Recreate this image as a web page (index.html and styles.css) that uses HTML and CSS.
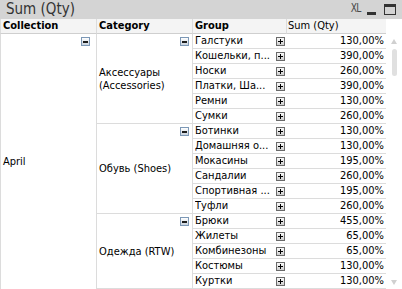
FILE: index.html
```html
<!DOCTYPE html>
<html>
<head>
<meta charset="utf-8">
<link rel="stylesheet" href="styles.css">
</head>
<body>
<div class="window">
  <div class="titlebar">
    <span class="title">Sum (Qty)</span>
    <div class="controls">
      <span class="xl">XL</span>
      <span class="min"></span>
      <span class="max"></span>
    </div>
  </div>
  <div class="content">
    <div class="pivot">
      <div class="hcell hcoll">Collection</div>
      <div class="hcell hcat">Category</div>
      <div class="hcell hgrp">Group</div>
      <div class="hcell hsum">Sum (Qty)</div>

      <div class="coll span17"><span class="collapse"></span><span class="ctext">April</span></div>

      <div class="cat span6"><span class="collapse"></span><span class="ctext">Аксессуары<br>(Accessories)</span></div>
      <div class="grp"><span class="gtext">Галстуки</span><span class="expand"></span></div><div class="sum">130,00%</div>
      <div class="grp"><span class="gtext">Кошельки, п...</span><span class="expand"></span></div><div class="sum">390,00%</div>
      <div class="grp"><span class="gtext">Носки</span><span class="expand"></span></div><div class="sum">260,00%</div>
      <div class="grp"><span class="gtext">Платки, Ша...</span><span class="expand"></span></div><div class="sum">390,00%</div>
      <div class="grp"><span class="gtext">Ремни</span><span class="expand"></span></div><div class="sum">130,00%</div>
      <div class="grp"><span class="gtext">Сумки</span><span class="expand"></span></div><div class="sum">260,00%</div>

      <div class="cat span6"><span class="collapse"></span><span class="ctext">Обувь (Shoes)</span></div>
      <div class="grp"><span class="gtext">Ботинки</span><span class="expand"></span></div><div class="sum">130,00%</div>
      <div class="grp"><span class="gtext">Домашняя о...</span><span class="expand"></span></div><div class="sum">130,00%</div>
      <div class="grp"><span class="gtext">Мокасины</span><span class="expand"></span></div><div class="sum">195,00%</div>
      <div class="grp"><span class="gtext">Сандалии</span><span class="expand"></span></div><div class="sum">260,00%</div>
      <div class="grp"><span class="gtext">Спортивная ...</span><span class="expand"></span></div><div class="sum">195,00%</div>
      <div class="grp"><span class="gtext">Туфли</span><span class="expand"></span></div><div class="sum">260,00%</div>

      <div class="cat span5"><span class="collapse"></span><span class="ctext">Одежда (RTW)</span></div>
      <div class="grp"><span class="gtext">Брюки</span><span class="expand"></span></div><div class="sum">455,00%</div>
      <div class="grp"><span class="gtext">Жилеты</span><span class="expand"></span></div><div class="sum">65,00%</div>
      <div class="grp"><span class="gtext">Комбинезоны</span><span class="expand"></span></div><div class="sum">65,00%</div>
      <div class="grp"><span class="gtext">Костюмы</span><span class="expand"></span></div><div class="sum">130,00%</div>
      <div class="grp"><span class="gtext">Куртки</span><span class="expand"></span></div><div class="sum">130,00%</div>
    </div>
    <div class="scrollbar">
      <span class="arrow up"></span>
      <span class="thumb"></span>
      <span class="track"></span>
      <span class="arrow down"></span>
    </div>
  </div>
</div>
</body>
</html>
```

FILE: styles.css
```css
html, body {
  margin: 0;
  padding: 0;
}

body {
  width: 402px;
  height: 289px;
  overflow: hidden;
  background: #ffffff;
  font-family: "DejaVu Sans Condensed", "DejaVu Sans", sans-serif;
  font-stretch: condensed;
  font-size: 11px;
  color: #000000;
}

.window {
  display: flex;
  flex-direction: column;
  height: 289px;
  overflow: hidden;
}

.titlebar {
  height: 19px;
  flex: 0 0 19px;
  background: #d4d4d4;
  display: flex;
  align-items: center;
  justify-content: space-between;
  padding: 0 6px 0 6px;
  box-sizing: border-box;
}

.title {
  font-size: 15px;
  color: #333333;
  line-height: 19px;
}

.controls {
  display: flex;
  align-items: center;
  gap: 5px;
}

.xl {
  font-size: 12px;
  color: #4a4a4a;
  letter-spacing: -1px;
  transform: scaleX(0.85);
  line-height: 12px;
  margin-top: -3px;
}

.min {
  width: 9px;
  height: 3px;
  background: #333333;
  margin-top: 7px;
  margin-left: 1px;
}

.max {
  border: 1px solid #333333;
  border-top-width: 3px;
  box-sizing: border-box;
  height: 11px;
  width: 12px;
  margin-left: 3px;
}

.content {
  display: flex;
  height: 270px;
}

.pivot {
  display: grid;
  grid-template-columns: 97px 96px 94px 99px;
  grid-template-rows: repeat(18, 15px);
  width: 386px;
}

.hcell {
  background: #f4f4f4;
  border-bottom: 1px solid #cfcfcf;
  border-right: 1px solid #dcdcdc;
  box-sizing: border-box;
  line-height: 14px;
  padding-left: 2px;
  font-weight: bold;
  white-space: nowrap;
  overflow: hidden;
}

.hcoll {
  border-left: 1px solid #dcdcdc;
}

.hsum {
  font-weight: normal;
  border-right: none;
  padding-left: 1px;
}

.coll, .cat {
  position: relative;
  display: flex;
  align-items: center;
  box-sizing: border-box;
  border-right: 1px solid #dcdcdc;
  line-height: 13px;
  padding-left: 2px;
}

.coll {
  border-left: 1px solid #dcdcdc;
}

.cat {
  border-bottom: 1px solid #dcdcdc;
  grid-column: 2;
}

.span17 {
  grid-row: 2 / span 17;
  grid-column: 1;
}

.span6 {
  grid-row: span 6;
}

.span5 {
  grid-row: span 5;
}

.collapse {
  position: absolute;
  top: 3px;
  width: 9px;
  height: 9px;
  box-sizing: border-box;
  border: 1px solid #7c98b6;
  background: linear-gradient(#ffffff, #c9d3de);
  display: flex;
  align-items: center;
  justify-content: center;
}

.collapse::before {
  content: "";
  width: 5px;
  height: 2px;
  background: #1c1c1c;
}

.coll .collapse {
  right: 6px;
}

.cat .collapse {
  right: 3px;
}

.grp {
  grid-column: 3;
  display: flex;
  align-items: center;
  border-bottom: 1px solid #dcdcdc;
  box-sizing: border-box;
  padding-left: 2px;
  padding-right: 2px;
  line-height: 14px;
}

.gtext {
  flex: 1;
  white-space: nowrap;
  overflow: hidden;
}

.expand {
  position: relative;
  flex: 0 0 9px;
  width: 9px;
  height: 9px;
  box-sizing: border-box;
  border: 1px solid #6a6a6a;
  background: linear-gradient(#fafafa, #cfcfcf);
}

.expand::before {
  content: "";
  position: absolute;
  left: 1px;
  top: 3px;
  width: 5px;
  height: 1px;
  background: #000000;
}

.expand::after {
  content: "";
  position: absolute;
  left: 3px;
  top: 1px;
  width: 1px;
  height: 5px;
  background: #000000;
}

.sum {
  grid-column: 4;
  border-bottom: 1px solid #dcdcdc;
  box-sizing: border-box;
  text-align: right;
  padding-right: 2px;
  line-height: 14px;
}

.scrollbar {
  flex: 1;
  margin-top: 15px;
  display: flex;
  flex-direction: column;
  align-items: center;
  padding-top: 5px;
  padding-bottom: 4px;
  box-sizing: border-box;
  height: 255px;
}

.arrow {
  width: 0;
  height: 0;
  border-left: 3px solid transparent;
  border-right: 3px solid transparent;
}

.arrow.up {
  border-bottom: 5px solid #d0d0d0;
}

.arrow.down {
  border-top: 5px solid #d0d0d0;
}

.thumb {
  margin-top: 5px;
  width: 5px;
  height: 27px;
  border-radius: 3px;
  background: #e0e0e0;
}

.track {
  flex: 1;
}
```
